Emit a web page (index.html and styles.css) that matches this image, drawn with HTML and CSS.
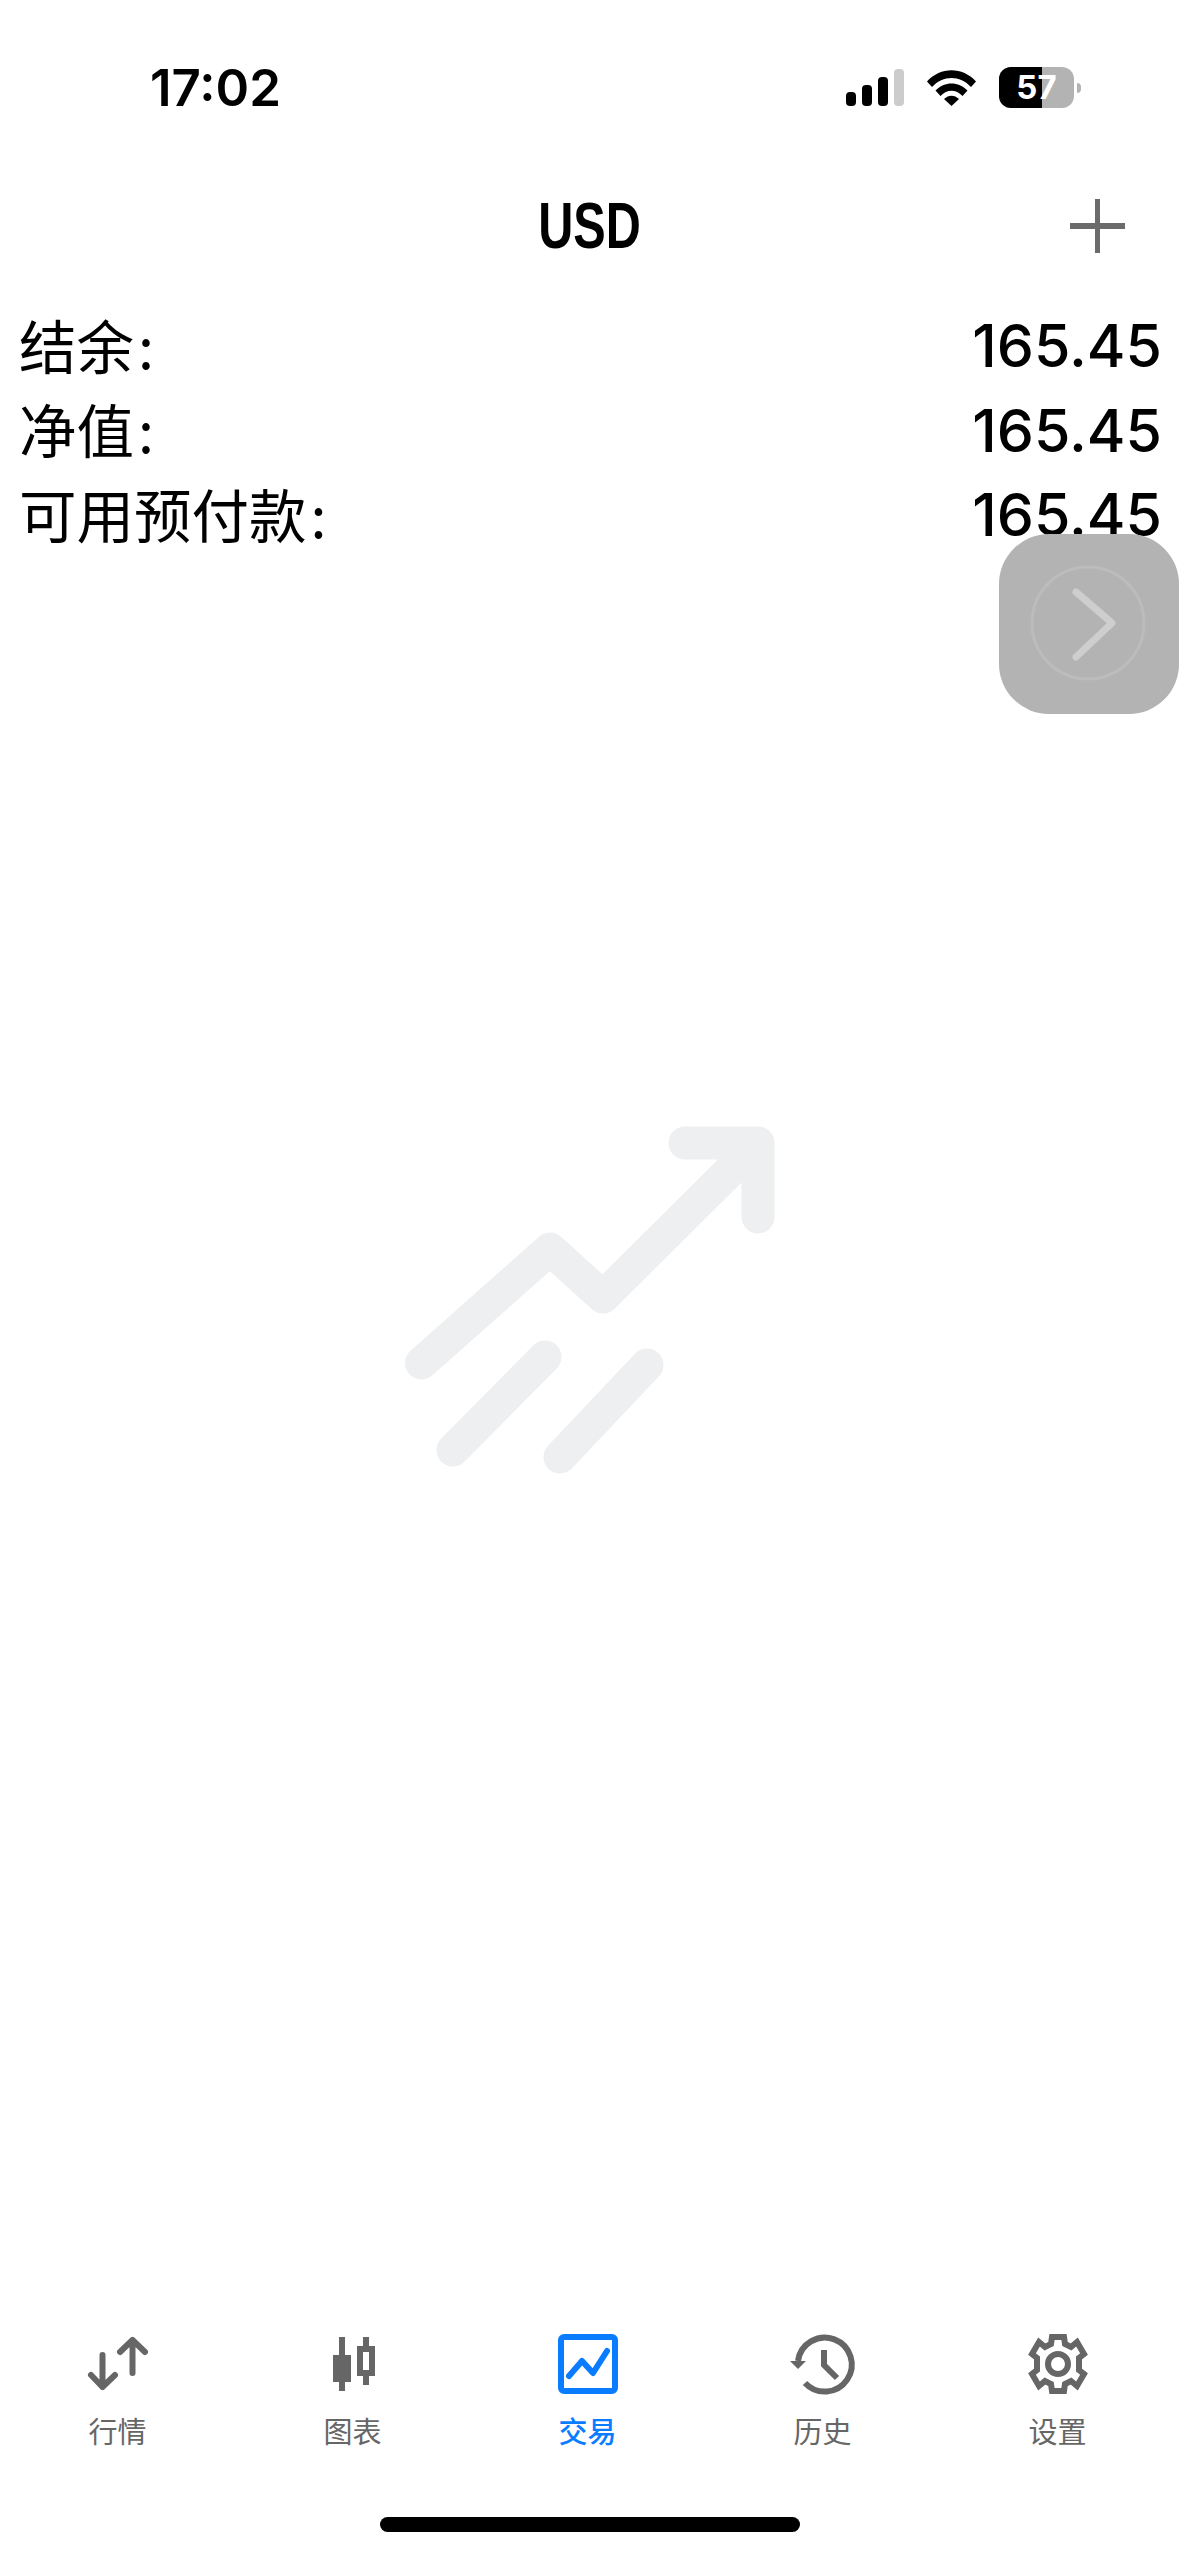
FILE: index.html
```html
<!DOCTYPE html>
<html lang="zh-CN">
<head>
  <meta charset="UTF-8" />
  <meta name="viewport" content="width=device-width, initial-scale=1.0" />
  <title>交易</title>
  <link rel="stylesheet" href="styles.css">
</head>
<body>
  <div class="screen">
    <!-- ===== STATUS BAR ===== -->
    <header class="status-bar">
      <span class="clock">17:02</span>
      <div class="status-icons">
        <div class="signal">
          <span class="bar bar-1"></span>
          <span class="bar bar-2"></span>
          <span class="bar bar-3"></span>
          <span class="bar bar-4"></span>
        </div>
        <svg class="wifi" viewBox="0 0 51 37">
          <path d="M1 12.500C14.500 -2.500 36.500 -2.500 50 12.500L45 18C34 6 17 6 6 18Z" />
          <path d="M9.500 21.500C18.500 12 32.500 12 41.500 21.500L36.500 27C30 20 21 20 14.500 27Z" />
          <path d="M18 30C22.500 25.500 28.500 25.500 33 30L25.500 37Z" />
        </svg>
        <div class="battery">
          <div class="battery-body">
            <span class="battery-fill"></span>
            <span class="battery-level">57</span>
          </div>
          <span class="battery-cap"></span>
        </div>
      </div>
    </header>

    <!-- ===== NAV BAR ===== -->
    <div class="nav-bar">
      <h1>USD</h1>
      <svg class="add" viewBox="0 0 55 54">
        <path d="M27.500 0V54" />
        <path class="add-h" d="M0 27H55" />
      </svg>
    </div>

    <!-- ===== ACCOUNT ===== -->
    <section class="account">
      <div class="row"><span class="label">结余<i>:</i></span><span class="value">165.45</span></div>
      <div class="row"><span class="label">净值<i>:</i></span><span class="value">165.45</span></div>
      <div class="row"><span class="label">可用预付款<i>:</i></span><span class="value">165.45</span></div>
    </section>

    <!-- floating button -->
    <button class="float-btn" type="button">
      <svg viewBox="0 0 180 180">
        <circle cx="89" cy="89" r="56" />
        <path d="M77 58L113 89L77 123" />
      </svg>
    </button>

    <!-- ===== EMPTY STATE ===== -->
    <main class="empty">
      <svg class="watermark" viewBox="0 0 370 320">
        <path d="M16.500 223L145 109L198 157L353 3H280M353 3V77" />
        <path d="M48 310L140 217" />
        <path d="M155 317L242 225" />
      </svg>
    </main>

    <!-- ===== TAB BAR ===== -->
    <nav class="tab-bar">
      <a class="tab">
        <svg viewBox="0 0 60 60">
          <path d="M14.500 21V53M3 41L14.500 53L27 41" />
          <path d="M44.500 39V6M32 18L44.500 6L57 18" />
        </svg>
        <span>行情</span>
      </a>
      <a class="tab">
        <svg viewBox="0 0 60 60">
          <path class="fill" d="M16 3H22V21H28V48H22V57H16V48H10V21H16Z" />
          <path class="fill" fill-rule="evenodd" d="M40 3H46V12H52V42H46V51H40V42H34V12H40ZM40 18V36H46V18Z" />
        </svg>
        <span>图表</span>
      </a>
      <a class="tab active">
        <svg viewBox="0 0 60 60">
          <rect x="3" y="3" width="54" height="54" rx="3" />
          <path d="M11 42L24 27L35 39L49 17" />
        </svg>
        <span>交易</span>
      </a>
      <a class="tab">
        <svg class="wide" viewBox="0 0 66 60">
          <path class="butt" d="M8 27A27 27 0 1 1 15 49" />
          <path class="fill" d="M0 27H16L8 35Z" />
          <path class="butt" d="M34 16V31L47 44" />
        </svg>
        <span>历史</span>
      </a>
      <a class="tab">
        <svg viewBox="0 0 60 60">
          <path class="miter" d="M24 3H36L37 10L43 13L49 8L56 20L51 24V36L56 40L49 52L43 47L37 50L36 57H24L23 50L17 47L11 52L4 40L9 36V24L4 20L11 8L17 13L23 10Z" />
          <circle cx="30" cy="30" r="10" />
        </svg>
        <span>设置</span>
      </a>
    </nav>

    <div class="home-bar"><span></span></div>
  </div>
</body>
</html>
```

FILE: styles.css
```css
:root {
  --fg: #000000;
  --muted: #666666;
  --blue: #0a7cff;
  --ui-font: "Inter", "Liberation Sans", "Noto Sans CJK SC", sans-serif;
}
* { box-sizing: border-box; margin: 0; padding: 0; }

body {
  width: 1179px;
  height: 2556px;
  background: #ffffff;
  color: var(--fg);
  font-family: var(--ui-font);
  overflow: hidden;
}
.screen {
  position: relative;
  display: flex;
  flex-direction: column;
  height: 100%;
}

/* ===== STATUS BAR ===== */
.status-bar {
  display: flex;
  align-items: center;
  justify-content: space-between;
  height: 175px;
  padding: 0 98px 0 150px;
}
.clock { font-size: 51px; font-weight: 600; line-height: 1; }
.status-icons { display: flex; align-items: center; gap: 22px; }
.signal { display: flex; align-items: flex-end; gap: 6px; height: 37px; }
.bar { width: 10px; border-radius: 4px; background: #000; }
.bar-1 { height: 14px; }
.bar-2 { height: 21px; }
.bar-3 { height: 29px; }
.bar-4 { height: 37px; background: #cccccc; }
.wifi { width: 51px; height: 37px; fill: #000; }
.battery { display: flex; align-items: center; gap: 3px; }
.battery-body {
  position: relative;
  width: 75px;
  height: 41px;
  border-radius: 12px;
  background: #b3b3b3;
  overflow: hidden;
  display: flex;
  align-items: center;
  justify-content: center;
}
.battery-fill { position: absolute; inset: 0 32px 0 0; background: #000; }
.battery-level {
  position: relative;
  color: #fff;
  font-size: 33px;
  font-weight: 700;
  line-height: 1;
}
.battery-cap {
  width: 4px;
  height: 10px;
  border-radius: 0 5px 5px 0;
  background: #b3b3b3;
}

/* ===== NAV BAR ===== */
.nav-bar {
  position: relative;
  display: flex;
  align-items: center;
  justify-content: center;
  height: 99px;
  margin-top: 1px;
}
.nav-bar h1 {
  font-family: "Liberation Sans", sans-serif;
  font-size: 64px;
  font-weight: 700;
  line-height: 1;
  transform: scaleX(0.76); /* title is a condensed face */
}
.add {
  position: absolute;
  top: 23px;
  right: 54px;
  width: 55px;
  height: 54px;
  fill: none;
  stroke: #6b6b6b;
  stroke-width: 5;
}
.add-h { stroke-width: 6; }

/* ===== ACCOUNT ===== */
.account { padding: 27px 17px 0 19px; }
.row {
  display: flex;
  align-items: center;
  justify-content: space-between;
  height: 84.500px;
}
.label {
  font-family: "Noto Sans CJK SC", sans-serif;
  font-size: 57.500px;
  line-height: 1;
}
.label i { font-style: normal; margin-left: 4px; }
.value { padding-top: 3px; font-size: 59px; font-weight: 450; line-height: 1; }

/* floating button, sits over the rows */
.float-btn {
  position: absolute;
  top: 534px;
  left: 999px;
  width: 180px;
  height: 180px;
  border: none;
  border-radius: 50px;
  background: #b3b3b3;
}
.float-btn svg { display: block; width: 180px; height: 180px; fill: none; }
.float-btn circle { stroke: #bcbcbc; stroke-width: 3; }
.float-btn path {
  stroke: #cecece;
  stroke-width: 7;
  stroke-linecap: round;
  stroke-linejoin: round;
}

/* ===== EMPTY STATE ===== */
.empty {
  flex: 1;
  display: flex;
  justify-content: center;
  padding: 584px 0 0 0;
}
.watermark {
  width: 370px;
  height: 320px;
  overflow: visible;
  fill: none;
  stroke: #eeeff0;
  stroke-width: 33;
  stroke-linecap: round;
  stroke-linejoin: round;
}

/* ===== TAB BAR ===== */
.tab-bar {
  display: grid;
  grid-template-columns: repeat(5, 235px);
  padding-bottom: 110px;
}
.tab {
  display: flex;
  flex-direction: column;
  align-items: center;
  gap: 20px;
  color: var(--muted);
  font-family: "Noto Sans CJK SC", sans-serif;
  font-size: 29px;
  line-height: 32px;
}
.tab svg {
  width: 60px;
  height: 60px;
  fill: none;
  stroke: var(--muted);
  stroke-width: 6;
  stroke-linecap: round;
  stroke-linejoin: round;
  overflow: visible;
}
.tab svg.wide { width: 66px; }
.tab .fill { fill: var(--muted); stroke: none; }
.tab .butt { stroke-linecap: butt; stroke-linejoin: miter; }
.tab .miter { stroke-linejoin: miter; }
.tab.active { color: var(--blue); font-weight: 500; }
.tab.active svg { stroke: var(--blue); }

/* ===== HOME INDICATOR ===== */
.home-bar {
  position: absolute;
  left: 0;
  right: 0;
  bottom: 24px;
  display: flex;
  justify-content: center;
}
.home-bar span {
  width: 420px;
  height: 15px;
  border-radius: 8px;
  background: #000;
}
```
